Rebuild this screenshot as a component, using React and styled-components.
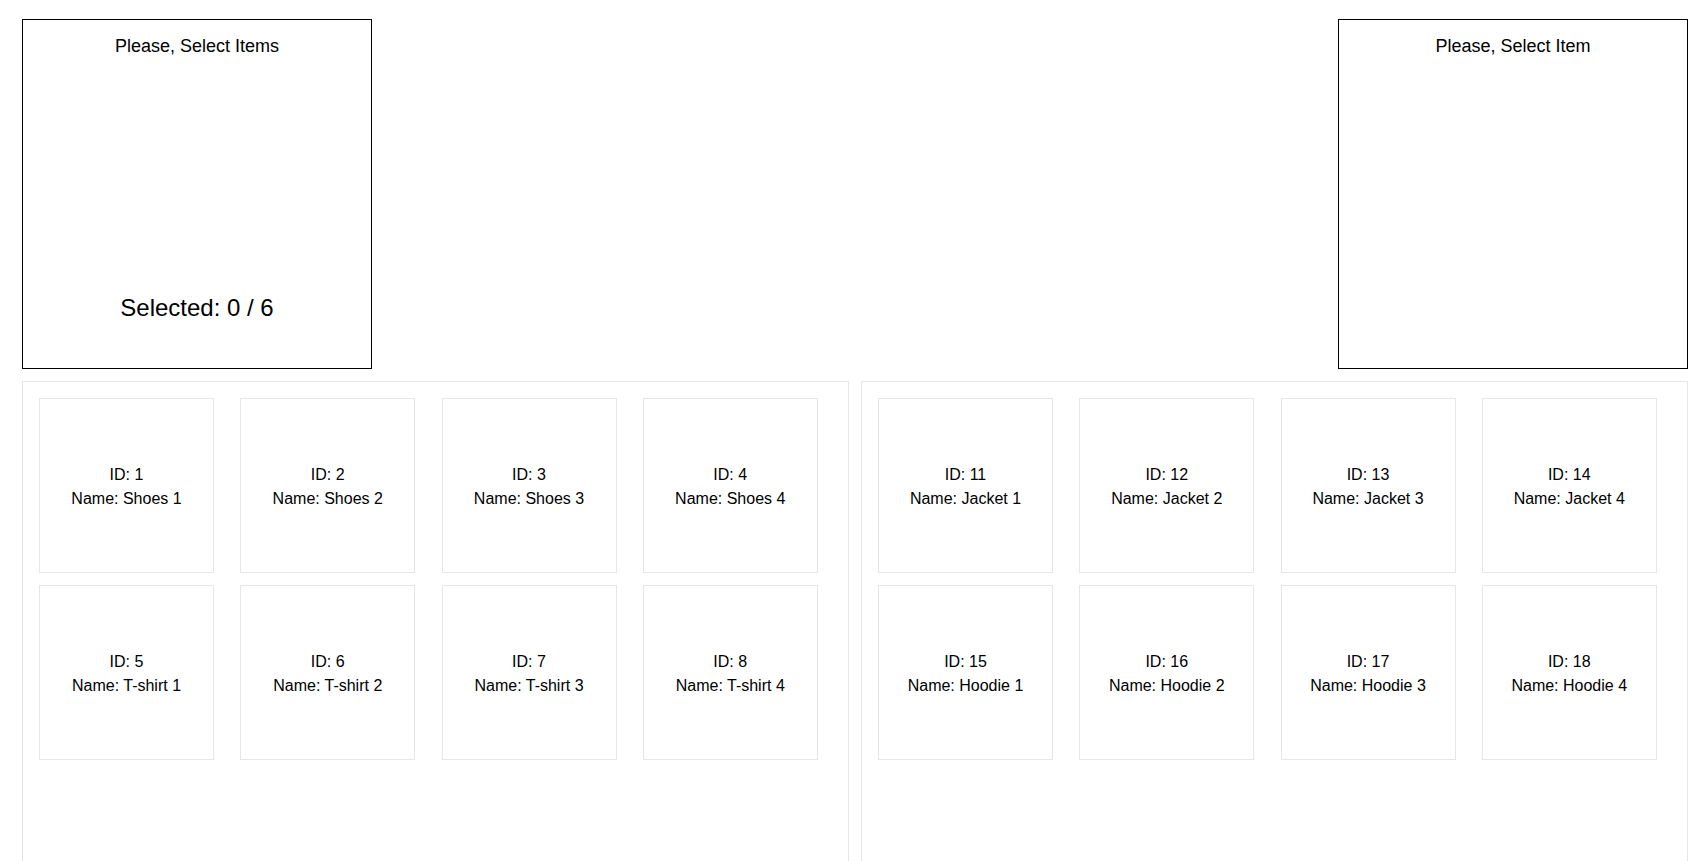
import React from "react";
import styled, { createGlobalStyle } from "styled-components";

const GlobalStyle = createGlobalStyle`
  * { box-sizing: border-box; }
  html, body { margin: 0; padding: 0; background: #ffffff; }
  body {
    font-family: "Liberation Sans", Arial, sans-serif;
    color: #000000;
  }
`;

const Page = styled.div`
  display: flex;
  flex-direction: column;
  gap: 12px;
  padding: 19px 13px 0 22px;
`;

const TopRow = styled.div`
  display: flex;
  justify-content: space-between;
  align-items: flex-start;
`;

const SelectBox = styled.div`
  width: 350px;
  height: 350px;
  border: 1px solid #000000;
  display: flex;
  flex-direction: column;
  align-items: center;
  padding: 14px 0 46px;
`;

const BoxTitle = styled.div`
  font-size: 18px;
  line-height: 24px;
  text-align: center;
`;

const SelectedCount = styled.div`
  margin-top: auto;
  font-size: 24px;
  line-height: 28px;
  text-align: center;
`;

const PanelRow = styled.div`
  display: grid;
  grid-template-columns: 1fr 1fr;
  gap: 12px;
`;

const Panel = styled.div`
  border: 1px solid #e6e6ea;
  padding: 16px;
  min-height: 520px;
  display: grid;
  grid-template-columns: repeat(4, 1fr);
  gap: 12px;
  align-content: start;
`;

const Card = styled.div`
  width: 175px;
  height: 175px;
  border: 1px solid #e6e6ea;
  display: flex;
  flex-direction: column;
  align-items: center;
  justify-content: center;
  padding-top: 2px;
  font-size: 16px;
  line-height: 24px;
  text-align: center;
`;

const leftItems = [
  { id: 1, name: "Shoes 1" },
  { id: 2, name: "Shoes 2" },
  { id: 3, name: "Shoes 3" },
  { id: 4, name: "Shoes 4" },
  { id: 5, name: "T-shirt 1" },
  { id: 6, name: "T-shirt 2" },
  { id: 7, name: "T-shirt 3" },
  { id: 8, name: "T-shirt 4" },
];

const rightItems = [
  { id: 11, name: "Jacket 1" },
  { id: 12, name: "Jacket 2" },
  { id: 13, name: "Jacket 3" },
  { id: 14, name: "Jacket 4" },
  { id: 15, name: "Hoodie 1" },
  { id: 16, name: "Hoodie 2" },
  { id: 17, name: "Hoodie 3" },
  { id: 18, name: "Hoodie 4" },
];

function ItemPanel({ items }) {
  return (
    <Panel>
      {items.map((it) => (
        <Card key={it.id}>
          <div>ID: {it.id}</div>
          <div>Name: {it.name}</div>
        </Card>
      ))}
    </Panel>
  );
}

export default function App() {
  return (
    <>
      <GlobalStyle />
      <Page>
        <TopRow>
          <SelectBox>
            <BoxTitle>Please, Select Items</BoxTitle>
            <SelectedCount>Selected: 0 / 6</SelectedCount>
          </SelectBox>
          <SelectBox>
            <BoxTitle>Please, Select Item</BoxTitle>
          </SelectBox>
        </TopRow>
        <PanelRow>
          <ItemPanel items={leftItems} />
          <ItemPanel items={rightItems} />
        </PanelRow>
      </Page>
    </>
  );
}
